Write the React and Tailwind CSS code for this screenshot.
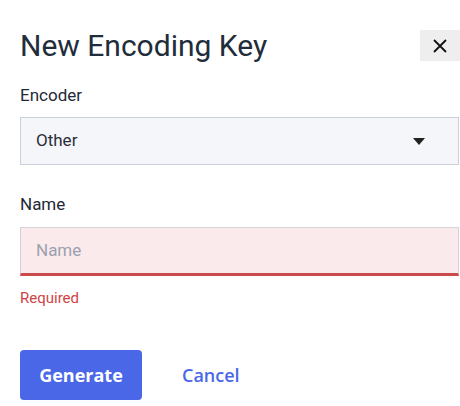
import { useState } from 'react'

export default function App() {
  const [name, setName] = useState('')

  return (
    <div className="w-[460px] h-[406px] bg-white font-['Roboto',sans-serif] overflow-hidden">
      <div className="pl-5 pt-[28px]">
        <div className="flex items-start justify-between">
          <h1 className="text-[30px] leading-[36px] text-[#222d3b] font-normal">New Encoding Key</h1>
          <button className="w-10 h-[31px] bg-[#eeeeee] flex items-center justify-center mt-[2px]">
            <svg width="16" height="16" viewBox="0 0 16 16" fill="none" stroke="#111" strokeWidth="1.8">
              <path d="M2 2 L14 14 M14 2 L2 14" />
            </svg>
          </button>
        </div>

        <label className="block mt-[21px] text-[17px] leading-[20px] text-[#1f2937]">Encoder</label>
        <div className="mt-[12px] mr-[1px] h-[48px] bg-[#f5f6fa] border border-[#ccd0db] flex items-center justify-between pl-[15px] pr-[33px]">
          <span className="text-[17px] text-[#2a2f38]">Other</span>
          <svg width="12" height="7" viewBox="0 0 12 7">
            <path d="M0 0 H12 L6 7 Z" fill="#222" />
          </svg>
        </div>

        <label className="block mt-[29px] text-[17px] leading-[20px] text-[#1f2937]">Name</label>
        <div className="mt-[13px] mr-[1px] h-[49px] bg-[#fbeaec] border border-[#d7d2da] border-b-[3px] border-b-[#c94b4b] flex items-center pl-[15px]">
          <input
            value={name}
            onChange={(e) => setName(e.target.value)}
            placeholder="Name"
            className="bg-transparent outline-none text-[17px] w-full placeholder:text-[#9ba1b0]"
          />
        </div>
        <div className="mt-[13px] text-[15px] leading-[18px] text-[#cf4444]">Required</div>

        <div className="mt-[43px] flex items-center gap-[40px]">
          <button className="w-[122px] h-[50px] rounded-[4px] bg-[#4a67e8] text-white text-[18px] font-bold font-['Open_Sans',sans-serif]">
            Generate
          </button>
          <button className="text-[#4a67e8] text-[18px] font-semibold font-['Open_Sans',sans-serif]">Cancel</button>
        </div>
      </div>
    </div>
  )
}
